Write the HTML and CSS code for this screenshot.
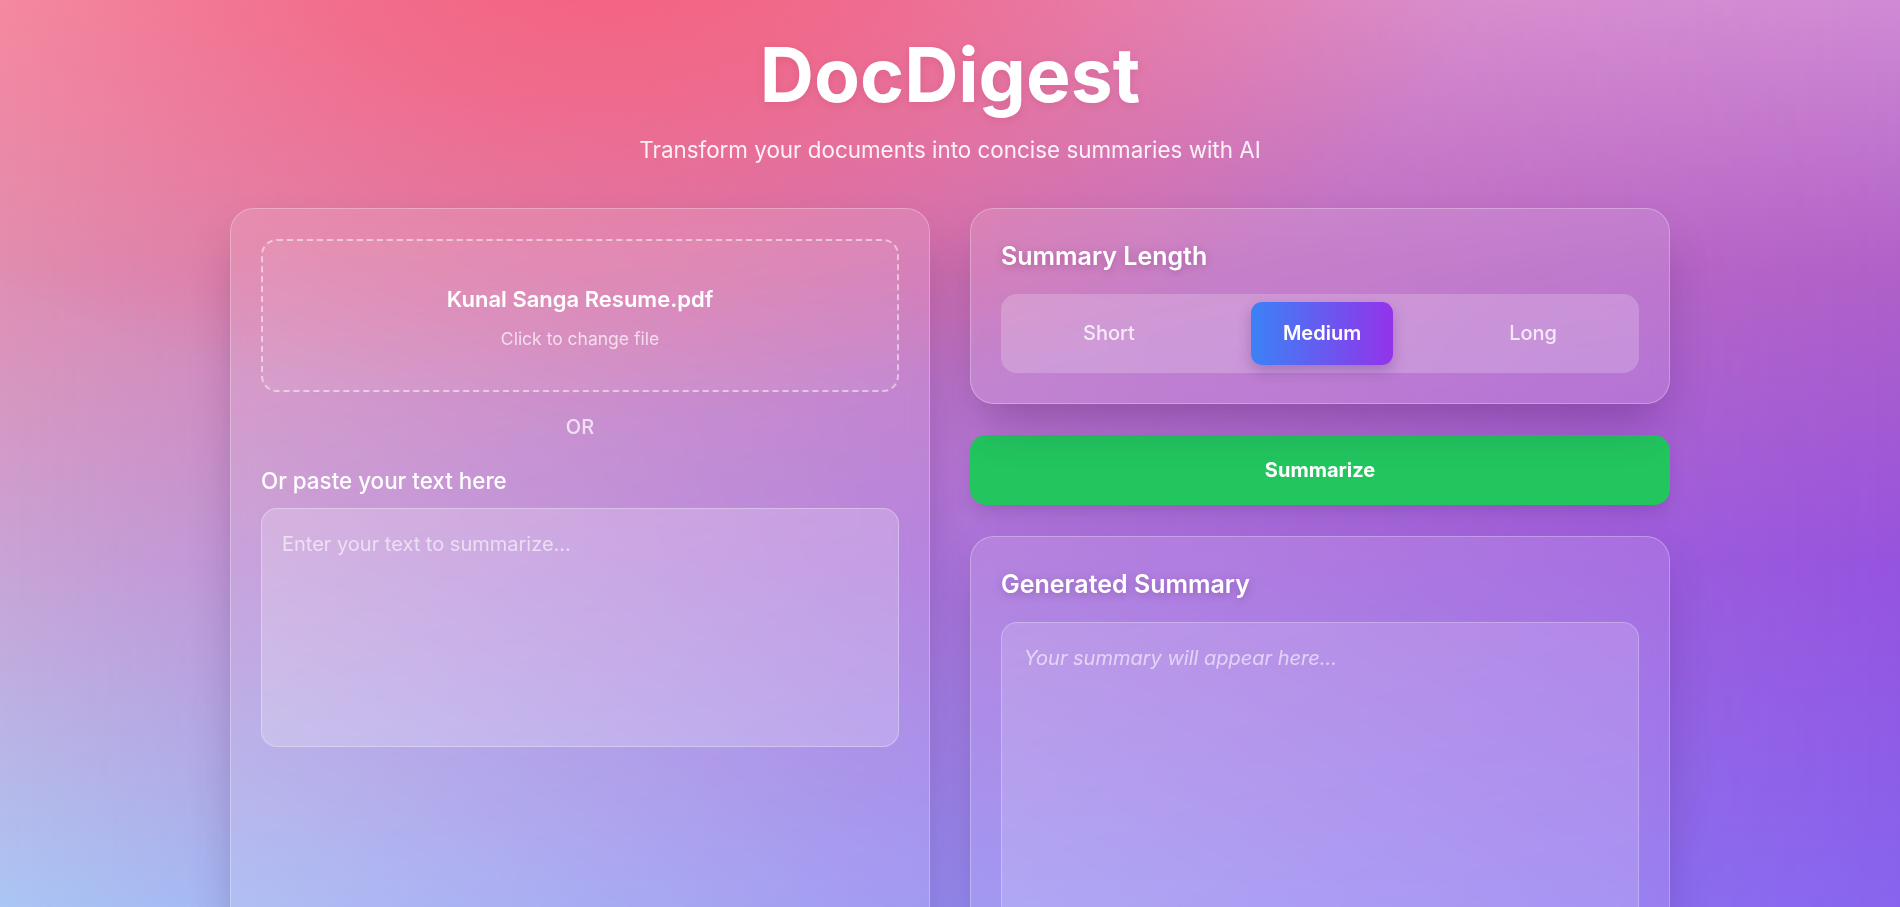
FILE: index.html
```html
<!DOCTYPE html>
<html lang="en">
<head>
<meta charset="utf-8">
<title>DocDigest</title>
<link rel="stylesheet" href="styles.css">
</head>
<body>
<div class="page">
  <header class="hero">
    <h1 class="brand">DocDigest</h1>
    <p class="tagline">Transform your documents into concise summaries with AI</p>
  </header>
  <main class="grid">
    <section class="card input-card">
      <label class="dropzone">
        <span class="file-name">Kunal Sanga Resume.pdf</span>
        <span class="file-hint">Click to change file</span>
      </label>
      <div class="divider">OR</div>
      <label class="field-label" for="src">Or paste your text here</label>
      <textarea id="src" class="text-input" placeholder="Enter your text to summarize..."></textarea>
    </section>
    <div class="side">
      <section class="card">
        <h2 class="card-title">Summary Length</h2>
        <div class="segmented">
          <button class="seg" type="button">Short</button>
          <button class="seg active" type="button">Medium</button>
          <button class="seg" type="button">Long</button>
        </div>
      </section>
      <button class="summarize" type="button">Summarize</button>
      <section class="card output-card">
        <h2 class="card-title">Generated Summary</h2>
        <div class="output">
          <p class="output-placeholder">Your summary will appear here...</p>
        </div>
      </section>
    </div>
  </main>
</div>
</body>
</html>
```

FILE: styles.css
```css
* {
  box-sizing: border-box;
}

html {
  scrollbar-width: none;
}

html::-webkit-scrollbar {
  display: none;
}

body {
  margin: 0;
  min-height: 100vh;
  font-family: Inter, "Noto Sans", sans-serif;
  color: #fff;
  background: linear-gradient(to bottom, #f59bb0 0%, #e08fb2 30%, #c9a3d6 62%, #abc6f4 100%) fixed;
}

body::before {
  content: "";
  position: fixed;
  inset: 0;
  z-index: -1;
  background: linear-gradient(to bottom, #d08ad4 0%, #b060c8 30%, #9653de 62%, #8764ee 100%);
  -webkit-mask-image: linear-gradient(to right, rgba(0,0,0,0) 0%, rgba(0,0,0,0.55) 45%, #000 100%);
  mask-image: linear-gradient(to right, rgba(0,0,0,0) 0%, rgba(0,0,0,0.55) 45%, #000 100%);
}

body::after {
  content: "";
  position: fixed;
  inset: 0;
  z-index: -1;
  background: radial-gradient(1150px 620px at 32% -50px,
    rgba(244, 96, 126, 1) 0%,
    rgba(244, 96, 126, 0.75) 25%,
    rgba(244, 96, 126, 0.35) 50%,
    rgba(244, 96, 126, 0) 75%);
}

.page {
  padding: 29px 0 40px;
}

.hero {
  text-align: center;
}

.brand {
  margin: 0 0 16px;
  font-size: 75px;
  font-weight: 700;
  line-height: normal;
  letter-spacing: 0;
  text-shadow: 0 2px 10px rgba(120, 20, 60, 0.12);
}

.tagline {
  margin: 0 0 45px;
  font-size: 22.4px;
  line-height: normal;
  color: rgba(255, 255, 255, 0.9);
}

.grid {
  display: grid;
  grid-template-columns: 1fr 1fr;
  gap: 40px;
  max-width: 1440px;
  margin: 0 auto;
}

.card {
  background: rgba(255, 255, 255, 0.12);
  border: 1px solid rgba(255, 255, 255, 0.28);
  border-radius: 24px;
  padding: 30px;
  box-shadow: 0 25px 50px -12px rgba(40, 0, 60, 0.3);
  -webkit-backdrop-filter: blur(12px);
  backdrop-filter: blur(12px);
}

.input-card {
  display: flex;
  flex-direction: column;
}

.dropzone {
  display: flex;
  flex-direction: column;
  align-items: center;
  height: 153px;
  padding-top: 45px;
  border: 2px dashed rgba(255, 255, 255, 0.5);
  border-radius: 16px;
  background: rgba(255, 255, 255, 0.05);
  cursor: pointer;
}

.file-name {
  font-size: 22px;
  font-weight: 600;
  line-height: normal;
}

.file-hint {
  margin-top: 16px;
  font-size: 17.5px;
  line-height: normal;
  color: rgba(255, 255, 255, 0.7);
}

.divider {
  margin: 23px 0 28px;
  text-align: center;
  font-size: 20px;
  font-weight: 500;
  line-height: normal;
  color: rgba(255, 255, 255, 0.72);
}

.field-label {
  margin-bottom: 14px;
  font-size: 22.4px;
  font-weight: 500;
  line-height: normal;
}

.text-input {
  display: block;
  width: 100%;
  height: 239px;
  padding: 20px;
  resize: none;
  font-family: inherit;
  font-size: 20px;
  line-height: 1.5;
  color: #fff;
  background: rgba(255, 255, 255, 0.2);
  border: 1px solid rgba(255, 255, 255, 0.3);
  border-radius: 16px;
  outline: none;
}

.text-input::placeholder {
  color: rgba(255, 255, 255, 0.6);
}

.side {
  display: flex;
  flex-direction: column;
  gap: 31px;
}

.card-title {
  margin: 0 0 21px;
  font-size: 25px;
  font-weight: 600;
  line-height: 34px;
  text-shadow: 0 2px 8px rgba(60, 0, 60, 0.25);
}

.segmented {
  display: flex;
  justify-content: space-around;
  padding: 8px;
  border-radius: 16px;
  background: rgba(255, 255, 255, 0.2);
}

.seg {
  padding: 16px 32px;
  border: 0;
  border-radius: 11px;
  background: transparent;
  font-family: inherit;
  font-size: 20px;
  font-weight: 500;
  line-height: 31px;
  color: rgba(255, 255, 255, 0.8);
  cursor: pointer;
}

.seg.active {
  font-weight: 600;
  color: #fff;
  background: linear-gradient(to right, #3b82f6, #9333ea);
  box-shadow: 0 6px 14px rgba(60, 20, 90, 0.25);
}

.summarize {
  display: block;
  width: 100%;
  padding: 23px 0;
  border: 0;
  border-radius: 16px;
  background: #22c55e;
  font-family: inherit;
  font-size: 20px;
  font-weight: 700;
  line-height: normal;
  color: #fff;
  box-shadow: 0 10px 20px -5px rgba(60, 0, 80, 0.2);
  cursor: pointer;
}

.output {
  min-height: 400px;
  padding: 20px 22px;
  background: rgba(255, 255, 255, 0.15);
  border: 1px solid rgba(255, 255, 255, 0.25);
  border-radius: 16px;
}

.output-placeholder {
  margin: 0;
  font-size: 20px;
  font-style: italic;
  line-height: 1.5;
  color: rgba(255, 255, 255, 0.6);
}
```
